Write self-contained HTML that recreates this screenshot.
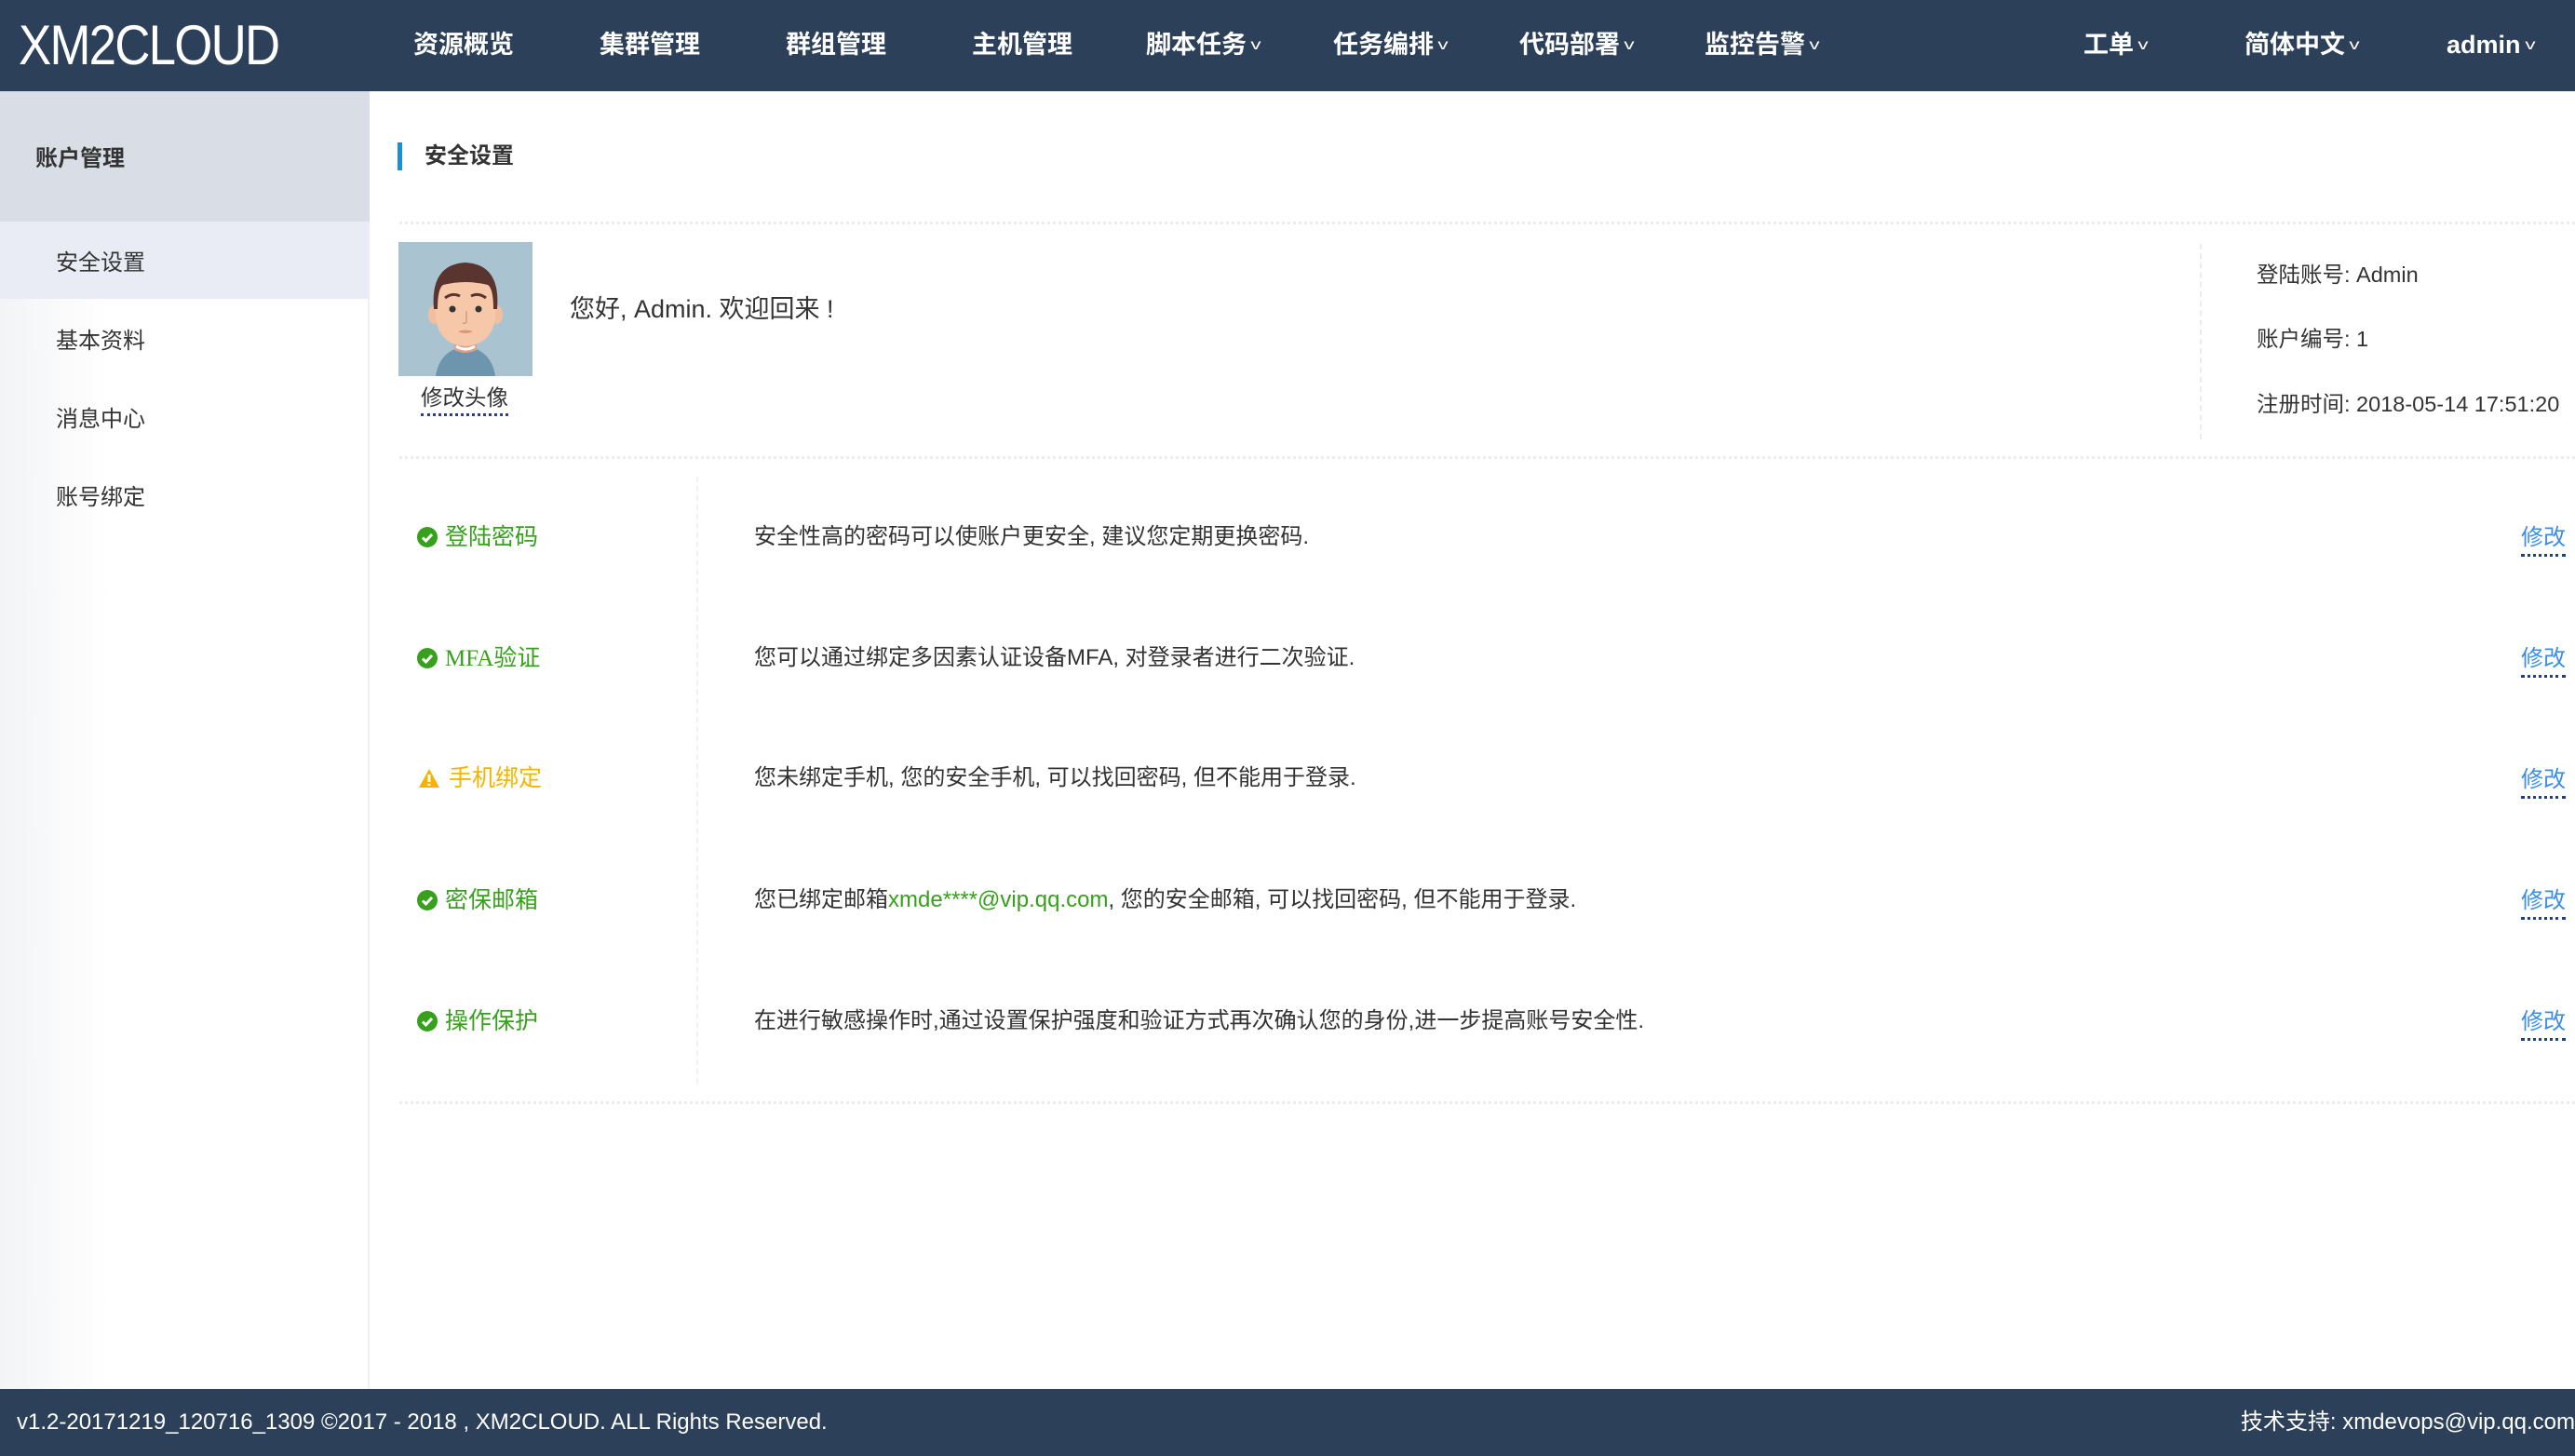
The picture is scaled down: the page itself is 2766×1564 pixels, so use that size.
<!DOCTYPE html>
<html><head><meta charset="utf-8"><style>
*{margin:0;padding:0;box-sizing:border-box}
body{width:2766px;height:1564px;position:relative;overflow:hidden;background:#fff;font-family:"Liberation Sans","Noto Sans CJK SC",sans-serif;color:#333}
.abs{position:absolute;white-space:nowrap}
#nav{position:absolute;left:0;top:0;width:2766px;height:98px;background:#2d4059}
.ni{position:absolute;top:28px;color:#fff;font-size:27px;font-weight:bold;line-height:40px}
.ni .c{font-size:16px;font-weight:normal;margin-left:6px;display:inline-block;transform:scaleX(1.4) translateY(-4px)}
#side{position:absolute;left:0;top:98px;width:397px;height:1394px;background:linear-gradient(90deg,#f3f4f6,#fff 30%);border-right:2px solid #eef0f3}
.si{position:absolute;left:60px;font-size:24px;color:#333}
#foot{position:absolute;left:0;top:1492px;width:2766px;height:72px;background:#2d4059;color:#fff;font-size:24px}
.dot{position:absolute;height:0;border-top:3px dotted #ececec}
.g{color:#37a01c}
.lbl{position:absolute;left:448px;font-size:25px;line-height:36px}
.desc{position:absolute;left:810px;font-size:24px;line-height:36px;color:#333}
.mod{position:absolute;left:2708px;font-size:24px;line-height:34px;color:#3b8ee8;border-bottom:3px dotted #1c3f94}
.ic{display:inline-block;width:22px;height:22px;vertical-align:-3px;margin-right:8px}
</style></head><body>
<div id="nav">
<div class="abs" style="left:20px;top:14px;color:#fff;font-size:60px;line-height:70px;letter-spacing:-2px;transform:scaleX(0.88);transform-origin:left;font-weight:normal">XM2CLOUD</div>
<div class="ni" style="left:444px">资源概览</div>
<div class="ni" style="left:644px">集群管理</div>
<div class="ni" style="left:844px">群组管理</div>
<div class="ni" style="left:1044px">主机管理</div>
<div class="ni" style="left:1231px">脚本任务<span class="c">v</span></div>
<div class="ni" style="left:1432px">任务编排<span class="c">v</span></div>
<div class="ni" style="left:1632px">代码部署<span class="c">v</span></div>
<div class="ni" style="left:1831px">监控告警<span class="c">v</span></div>
<div class="ni" style="left:2238px">工单<span class="c">v</span></div>
<div class="ni" style="left:2411px">简体中文<span class="c">v</span></div>
<div class="ni" style="left:2628px">admin<span class="c">v</span></div>
</div>
<div id="side">
<div style="position:absolute;left:0;top:0;width:397px;height:140px;background:#d9dee6"></div>
<div class="abs" style="left:38px;top:52px;font-size:24px;font-weight:bold;color:#333">账户管理</div>
<div style="position:absolute;left:0;top:140px;width:397px;height:83px;background:#e9ecf4"></div>
<div class="si" style="top:164px">安全设置</div>
<div class="si" style="top:248px">基本资料</div>
<div class="si" style="top:332px">消息中心</div>
<div class="si" style="top:416px">账号绑定</div>
</div>
<div style="position:absolute;left:427px;top:153px;width:5px;height:30px;background:#1890d8"></div>
<div class="abs" style="left:456px;top:150px;font-size:24px;font-weight:bold;line-height:36px">安全设置</div>
<div class="dot" style="left:429px;top:238px;width:2337px"></div>
<svg class="abs" style="left:428px;top:260px" width="144" height="144" viewBox="0 0 144 144">
<rect width="144" height="144" fill="#a9c3d0"/>
<path d="M40 144 Q44 116 72 112 Q100 116 104 144Z" fill="#6d95ad"/>
<path d="M60 100 h24 v16 q-12 6 -24 0Z" fill="#daa08a"/>
<path d="M62 112 q10 6 20 0" stroke="#fff" stroke-width="3" fill="none"/>
<ellipse cx="38" cy="78" rx="6" ry="10" fill="#f0bfa0"/><ellipse cx="106" cy="78" rx="6" ry="10" fill="#f0bfa0"/>
<path d="M40 60 Q40 30 72 28 Q104 30 104 60 L104 82 Q100 110 72 112 Q44 110 40 82Z" fill="#f6c8a9"/>
<path d="M38 72 Q34 24 72 22 Q110 24 106 72 L102 72 Q102 50 96 46 Q72 40 48 46 Q42 50 42 72Z" fill="#5a3530"/>
<path d="M50 60 q8 -6 16 -2 M78 58 q8 -4 16 2" stroke="#5a3530" stroke-width="3" fill="none"/>
<circle cx="58" cy="72" r="3.5" fill="#333"/><circle cx="86" cy="72" r="3.5" fill="#333"/>
<path d="M73 74 v12 q-2 2 -4 1" stroke="#d49a80" stroke-width="1.5" fill="none"/>
<path d="M64 96 q8 4 16 0 q-8 -3 -16 0" fill="#d9967a"/>
</svg>
<div class="abs" style="left:452px;top:410px;font-size:23.5px;line-height:34px;border-bottom:3px dotted #2a3f8f">修改头像</div>
<div class="abs" style="left:612px;top:312px;font-size:27px;line-height:40px">您好, Admin. 欢迎回来 !</div>
<div style="position:absolute;left:2363px;top:262px;height:210px;border-left:2px dashed #ececec"></div>
<div class="abs" style="left:2424px;top:278px;font-size:23.5px;line-height:34px">登陆账号: Admin</div>
<div class="abs" style="left:2424px;top:347px;font-size:23.5px;line-height:34px">账户编号: 1</div>
<div class="abs" style="left:2424px;top:417px;font-size:23.5px;line-height:34px">注册时间: 2018-05-14 17:51:20</div>
<div class="dot" style="left:429px;top:490px;width:2337px"></div>
<div style="position:absolute;left:748px;top:512px;height:652px;border-left:2px dashed #f0f0f0"></div>

<div class="lbl g" style="top:559px"><svg class="ic" viewBox="0 0 22 22"><circle cx="11" cy="11" r="11" fill="#37a01c"/><path d="M6 11.5l3.5 3.5 6.5-7" stroke="#fff" stroke-width="3" fill="none"/></svg>登陆密码</div>
<div class="desc" style="top:559px">安全性高的密码可以使账户更安全, 建议您定期更换密码.</div>
<div class="mod" style="top:561px">修改</div>

<div class="lbl g" style="top:689px"><svg class="ic" viewBox="0 0 22 22"><circle cx="11" cy="11" r="11" fill="#37a01c"/><path d="M6 11.5l3.5 3.5 6.5-7" stroke="#fff" stroke-width="3" fill="none"/></svg><span style="font-family:'Liberation Serif','Noto Sans CJK SC',serif">MFA</span>验证</div>
<div class="desc" style="top:689px">您可以通过绑定多因素认证设备MFA, 对登录者进行二次验证.</div>
<div class="mod" style="top:691px">修改</div>

<div class="lbl" style="top:818px;color:#f5b400"><svg class="ic" viewBox="0 0 22 22" style="width:26px"><path d="M11 1L22 21H0Z" fill="#f5b400"/><path d="M11 7v8M11 17v2" stroke="#fff" stroke-width="3"/></svg>手机绑定</div>
<div class="desc" style="top:818px">您未绑定手机, 您的安全手机, 可以找回密码, 但不能用于登录.</div>
<div class="mod" style="top:821px">修改</div>

<div class="lbl g" style="top:949px"><svg class="ic" viewBox="0 0 22 22"><circle cx="11" cy="11" r="11" fill="#37a01c"/><path d="M6 11.5l3.5 3.5 6.5-7" stroke="#fff" stroke-width="3" fill="none"/></svg>密保邮箱</div>
<div class="desc" style="top:949px">您已绑定邮箱<span class="g">xmde****@vip.qq.com</span>, 您的安全邮箱, 可以找回密码, 但不能用于登录.</div>
<div class="mod" style="top:951px">修改</div>

<div class="lbl g" style="top:1079px"><svg class="ic" viewBox="0 0 22 22"><circle cx="11" cy="11" r="11" fill="#37a01c"/><path d="M6 11.5l3.5 3.5 6.5-7" stroke="#fff" stroke-width="3" fill="none"/></svg>操作保护</div>
<div class="desc" style="top:1079px">在进行敏感操作时,通过设置保护强度和验证方式再次确认您的身份,进一步提高账号安全性.</div>
<div class="mod" style="top:1081px">修改</div>

<div class="dot" style="left:429px;top:1183px;width:2337px"></div>
<div id="foot">
<div class="abs" style="left:18px;top:18px;line-height:36px">v1.2-20171219_120716_1309 ©2017 - 2018 , XM2CLOUD. ALL Rights Reserved.</div>
<div class="abs" style="right:0;top:18px;line-height:36px">技术支持: xmdevops@vip.qq.com</div>
</div>
</body></html>
